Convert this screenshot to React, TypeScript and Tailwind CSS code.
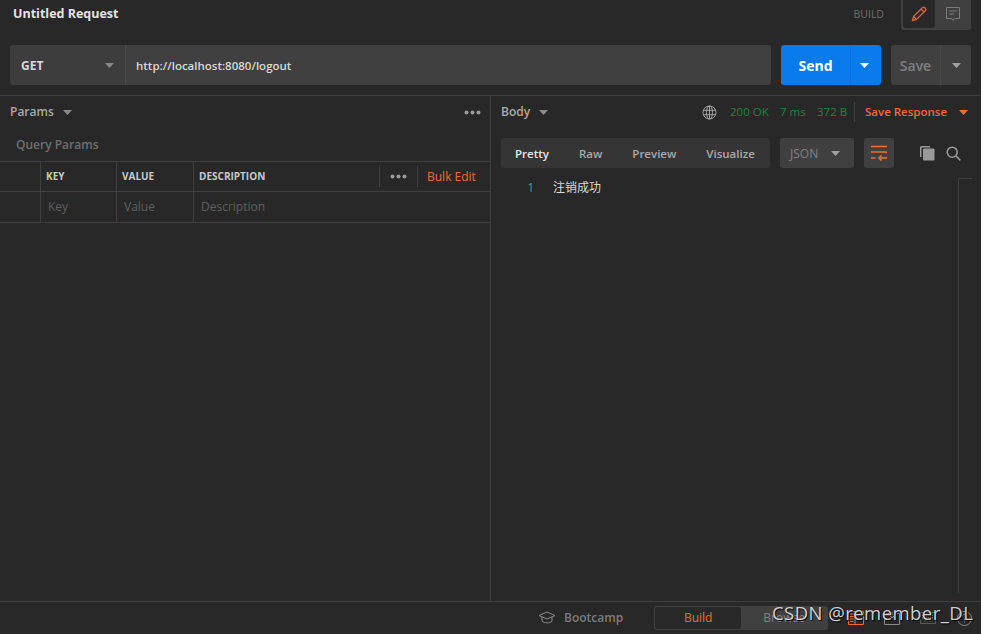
function Caret({ className }: { className: string }) {
  return (
    <svg className={className} width="9" height="5" viewBox="0 0 9 5" fill="currentColor">
      <path d="M0 0h9L4.5 5z" />
    </svg>
  );
}

function Dots({ className }: { className?: string }) {
  return (
    <svg className={className} width="17" height="5" viewBox="0 0 17 5" fill="#9a9a9a">
      <circle cx="2.5" cy="2.5" r="2" />
      <circle cx="8.5" cy="2.5" r="2" />
      <circle cx="14.5" cy="2.5" r="2" />
    </svg>
  );
}

function RequestPane() {
  return (
    <div className="w-[491px] shrink-0 border-r border-[#3f3f3f]">
      <div className="flex h-[32px] items-center justify-between pl-[10px] pr-[9px]">
        <div className="flex items-center gap-[9px] text-[12px] font-semibold text-[#a9a9a9]">
          Params
          <Caret className="text-[#8a8a8a]" />
        </div>
        <Dots />
      </div>
      <div className="flex h-[33px] items-center pl-[16px] text-[12px] font-semibold text-[#6f6f6f]">Query Params</div>
      <div className="flex h-[31px] border-y border-[#3f3f3f] text-[10px] font-bold text-[#c8c8c8]">
        <div className="w-[41px] border-r border-[#3f3f3f]" />
        <div className="flex w-[76px] items-center border-r border-[#3f3f3f] pl-[5px]">KEY</div>
        <div className="flex w-[77px] items-center border-r border-[#3f3f3f] pl-[5px]">VALUE</div>
        <div className="flex flex-1 items-center pl-[5px]">DESCRIPTION</div>
        <div className="my-[4px] flex w-[38px] items-center justify-center border-l border-[#3f3f3f]">
          <Dots />
        </div>
        <div className="my-[4px] flex w-[73px] items-center border-l border-[#3f3f3f] pl-[9px] text-[12px] font-normal text-[#f26b3a]">
          Bulk Edit
        </div>
      </div>
      <div className="flex h-[31px] border-b border-[#3f3f3f] text-[12px] text-[#5f5f5f]">
        <div className="w-[41px] border-r border-[#3f3f3f]" />
        <div className="flex w-[76px] items-center border-r border-[#3f3f3f] pl-[7px]">Key</div>
        <div className="flex w-[77px] items-center border-r border-[#3f3f3f] pl-[7px]">Value</div>
        <div className="flex flex-1 items-center pl-[7px]">Description</div>
      </div>
    </div>
  );
}

function ResponsePane() {
  return (
    <div className="flex min-w-0 flex-1 flex-col">
      <div className="flex h-[32px] items-center whitespace-nowrap pl-[10px] text-[11.5px]">
        <div className="flex w-[201px] items-center gap-[9px] text-[12px] font-semibold text-[#a9a9a9]">
          Body
          <Caret className="text-[#8a8a8a]" />
        </div>
        <svg width="15" height="15" viewBox="0 0 15 15" fill="none" stroke="#a0a0a0" strokeWidth="1">
          <circle cx="7.5" cy="7.5" r="6.5" />
          <ellipse cx="7.5" cy="7.5" rx="3" ry="6.5" />
          <path d="M1 5.3h13M1 9.7h13M7.5 1v13" />
        </svg>
        <span className="ml-[13px] w-[37px] text-[#24803f]">200 OK</span>
        <span className="ml-[13px] w-[24px] text-[#24803f]">7 ms</span>
        <span className="ml-[13px] w-[29px] text-[#24803f]">372 B</span>
        <div className="ml-[8px] h-[20px] border-l border-[#3f3f3f]" />
        <span className="ml-[10px] w-[85px] font-semibold text-[#f26b3a]">Save Response</span>
        <Caret className="ml-[9px] text-[#f26b3a]" />
      </div>
      <div className="mt-[10px] flex h-[30px] items-center pl-[10px]">
        <div className="flex h-[30px] w-[269px] items-center rounded-[3px] bg-[#353535] pl-[14px] pt-[1px] text-[11.5px] font-semibold text-[#a9a9a9]">
          <span className="text-[#e8e8e8]">Pretty</span>
          <span className="ml-[30px]">Raw</span>
          <span className="ml-[30px]">Preview</span>
          <span className="ml-[30px]">Visualize</span>
        </div>
        <div className="ml-[10px] flex h-[30px] w-[74px] items-center justify-between rounded-[3px] bg-[#404040] pl-[10px] pr-[14px] pt-[1px] text-[12px] text-[#808080]">
          JSON
          <Caret className="text-[#a0a0a0]" />
        </div>
        <div className="ml-[10px] flex h-[30px] w-[30px] items-center justify-center rounded-[3px] bg-[#404040]">
          <svg width="16" height="16" viewBox="0 0 16 16" fill="none" stroke="#f26b3a" strokeWidth="1.6">
            <path d="M0 1.5h16M0 7h14a2 2 0 0 1 0 6H8M0 13h4.5" />
            <path d="M10.5 10.5L8 13l2.5 2.5" />
          </svg>
        </div>
        <svg className="ml-[26px]" width="15" height="15" viewBox="0 0 15 15" fill="#9a9a9a">
          <path d="M0 1.5A1.5 1.5 0 0 1 1.5 0H10v1.5H2a.5.5 0 0 0-.5.5v9H0z" />
          <rect x="3" y="2.5" width="11.5" height="12" rx="1" />
        </svg>
        <svg className="ml-[11px]" width="15" height="15" viewBox="0 0 15 15" fill="none" stroke="#9a9a9a" strokeWidth="1.6">
          <circle cx="6.2" cy="6.2" r="5" />
          <path d="M10 10l4.4 4.4" />
        </svg>
      </div>
      <div className="flex min-h-0 flex-1">
        <div className="flex flex-1 pt-[12px] text-[12px] leading-[16px]">
          <span className="w-[43px] text-right text-[#6b8f71]">1</span>
          <span className="ml-[19px] text-[#d8d8d8]">注销成功</span>
        </div>
        <div className="mr-[9px] mt-[10px] mb-[8px] w-[14px] border-l border-t border-[#3f3f3f]" />
      </div>
    </div>
  );
}

export default function App() {
  return (
    <div
      className="relative flex h-[634px] w-[990px] overflow-hidden bg-gradient-to-r from-[#9a9a9a] to-white to-40%"
      style={{ fontFamily: '"Open Sans", "Noto Sans CJK SC", sans-serif' }}
    >
      <div className="flex w-[981px] flex-col bg-[#282828]">
        <div className="flex h-[30px] items-start justify-between pl-[13px] pr-[10px]">
          <span className="mt-[5px] text-[12.5px] font-bold text-[#e4e4e4]">Untitled Request</span>
          <div className="flex items-center">
            <span className="mt-[-1px] mr-[17px] text-[10.5px] text-[#6f6f6f]">BUILD</span>
            <div className="flex h-[30px] w-[70px] rounded-b-[3px] bg-[#404040] pb-[2px] pl-[2px]">
              <div className="flex h-[28px] w-[32px] items-center justify-center rounded-b-[3px] bg-[#282828]">
                <svg width="16" height="16" viewBox="0 0 16 16" fill="none" stroke="#d9633a" strokeWidth="1.3">
                  <path d="M1.5 14.5l1-4L11.5 1.5a1.4 1.4 0 0 1 2 0l1 1a1.4 1.4 0 0 1 0 2L5.5 13.5z" />
                  <path d="M10 3l3 3M2.5 10.5l3 3" />
                </svg>
              </div>
              <div className="flex flex-1 items-center justify-center">
                <svg width="16" height="16" viewBox="0 0 16 16" fill="none" stroke="#7c7c7c" strokeWidth="1">
                  <path d="M1.5 1.5h13v11h-5l-1.5 2-1.5-2h-5z" />
                  <path d="M4 5h8M4 8h5" />
                </svg>
              </div>
            </div>
          </div>
        </div>
        <div className="mt-[15px] flex h-[40px] pl-[10px] pr-[10px]">
          <div className="flex h-full w-[116px] items-center justify-between rounded-l-[3px] border-r border-[#4a4a4a] bg-[#3d3d3d] pl-[11px] pr-[11px] pt-[1px] text-[12px] font-bold text-[#d8d8d8]">
            GET
            <Caret className="text-[#8a8a8a]" />
          </div>
          <div className="flex flex-1 items-center rounded-r-[3px] bg-[#404040] pl-[10px] pt-[1px] text-[11.5px] font-semibold text-[#d8d8d8]">
            http://localhost:8080/logout
          </div>
          <div className="ml-[10px] flex w-[100px] rounded-[3px] bg-[#097bed] text-white">
            <div className="flex w-[69px] items-center justify-center text-[14px] font-bold">Send</div>
            <div className="flex flex-1 items-center justify-center border-l border-[#0a6fd4] pr-[4px]">
              <Caret className="text-white" />
            </div>
          </div>
          <div className="ml-[10px] flex w-[80px] rounded-[3px] bg-[#404040] text-[#808080]">
            <div className="flex w-[49px] items-center justify-center text-[14px] font-semibold">Save</div>
            <div className="flex flex-1 items-center justify-center border-l border-[#4a4a4a]">
              <Caret className="text-[#a0a0a0]" />
            </div>
          </div>
        </div>
        <div className="mt-[10px] flex min-h-0 flex-1 border-y border-[#3f3f3f]">
          <RequestPane />
          <ResponsePane />
        </div>
        <div className="flex h-[32px] items-center pl-[538px] text-[12px]">
          <svg width="18" height="14" viewBox="0 0 18 14" fill="none" stroke="#8a8a8a" strokeWidth="1">
            <path d="M1 4.5L9 1l8 3.5L9 8z" />
            <path d="M4 6v4c2 2.5 8 2.5 10 0V6" />
          </svg>
          <span className="ml-[8px] font-semibold text-[#7c7c7c]">Bootcamp</span>
          <div className="ml-[31px] flex h-[24px] w-[174px] rounded-[3px] bg-[#404040] p-[1px]">
            <div className="flex w-[86px] items-center justify-center rounded-[3px] bg-[#282828] text-[#f26b3a]">Build</div>
            <div className="flex flex-1 items-center justify-center text-[#808080]">Browse</div>
          </div>
          <svg className="ml-[20px]" width="16" height="14" viewBox="0 0 16 14" fill="none" stroke="#f26b3a" strokeWidth="1">
            <path d="M.5.5h15v13H.5zM7 .5v13M2 3h3.5M2 5.5h3.5M2 8h3.5M2 10.5h3.5" />
          </svg>
          <svg className="ml-[20px]" width="16" height="14" viewBox="0 0 16 14" fill="none" stroke="#8a8a8a" strokeWidth="1">
            <path d="M5 2.5H.5v11h15v-11H11M8 1v6M6 5l2 2 2-2" />
          </svg>
          <svg className="ml-[20px]" width="16" height="12" viewBox="0 0 16 12" fill="none" stroke="#8a8a8a" strokeWidth="1">
            <path d="M.5.5h15v11H.5zM2 3.5h12M2 6h12M4.5 9h7" strokeDasharray="1 1" />
          </svg>
          <svg className="ml-[21px]" width="15" height="15" viewBox="0 0 15 15" fill="none" stroke="#8a8a8a" strokeWidth="1">
            <circle cx="7.5" cy="7.5" r="7" />
            <path d="M5.5 5.5a2 2 0 1 1 3 1.8c-.7.4-1 .8-1 1.7M7.5 10.5v1.2" />
          </svg>
        </div>
      </div>
      <div className="absolute left-[772px] top-[600px] text-[18.5px] leading-[26px] tracking-[0.45px] text-[#cfcfcf] [text-shadow:1px_1px_1px_#000]">
        CSDN @remember_DL
      </div>
    </div>
  );
}
